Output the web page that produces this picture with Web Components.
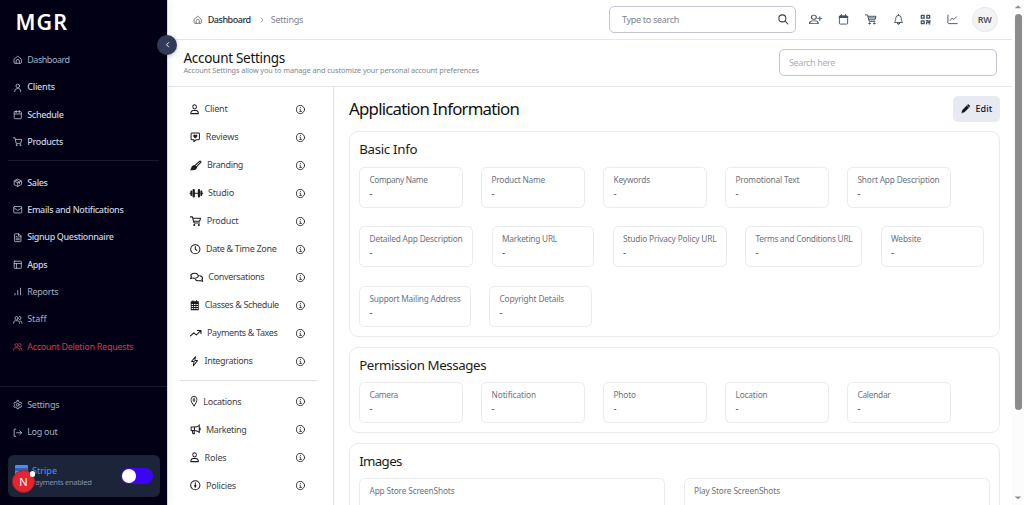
<!DOCTYPE html>
<html lang="en">
<head>
<meta charset="utf-8">
<title>Account Settings</title>
<style>
html,body{margin:0;height:100%;overflow:hidden}
body{font-family:"Noto Sans","Open Sans",sans-serif;background:#fff;color:#111827}
</style>
</head>
<body>
<app-shell></app-shell>
<script>
const ICONS = {
  home:'<path d="M3 10.5 12 3l9 7.5V20a1 1 0 0 1-1 1H4a1 1 0 0 1-1-1z"/><path d="M8 21v-6a4 4 0 0 1 8 0v6"/>',
  user:'<circle cx="12" cy="7.5" r="4.5"/><path d="M4.5 22v-2a6.5 6.5 0 0 1 6.5-6h2a6.5 6.5 0 0 1 6.5 6v2"/>',
  calendar:'<rect x="3" y="4" width="18" height="18" rx="2"/><path d="M16 1.5v5M8 1.5v5M3 10h18"/>',
  cart:'<circle cx="9" cy="20.5" r="1.3"/><circle cx="18.5" cy="20.5" r="1.3"/><path d="M1 2h4l3 14h11.5L22 6H6"/>',
  box:'<path d="m21 7.5-9-5-9 5v9l9 5 9-5zM3 7.5l9 5 9-5M12 12.500v9M7.500 5l9 5v4"/>',
  mail:'<rect x="2" y="4" width="20" height="16" rx="1.500"/><path d="m2 7 10 7 10-7"/>',
  file:'<path d="M14 2H5.500A1.500 1.500 0 0 0 4 3.500v17A1.500 1.500 0 0 0 5.500 22h13a1.500 1.500 0 0 0 1.500-1.500V8zM14 2v6h6M8 9h2M8 13h8M8 17h8"/>',
  layout:'<rect x="3" y="3" width="18" height="18" rx="1.500"/><path d="M3 9h18M9 21V9"/>',
  bars:'<path d="M19 20V3M12 20V9M5 20v-4"/>',
  users:'<circle cx="9" cy="8" r="4"/><path d="M1.500 21v-1.500a5 5 0 0 1 5-5h5a5 5 0 0 1 5 5V21M16 3.500a4 4 0 0 1 0 8.500M19 15a5 5 0 0 1 3.500 4.500V21"/>',
  gear:'<circle cx="12" cy="12" r="3.500"/><path d="m10 2-.7 3-2.300 1.300-3-.9-2 3.400L4.300 11v2.200L2 15.300l2 3.400 3-.9L9.300 19l.7 3h4l.7-3 2.300-1.200 3 .9 2-3.400-2.300-2.100V11L22 8.800l-2-3.400-3 .9L14.700 5 14 2z"/>',
  logout:'<path d="M7 3H3v18h4M9 12h13M17 7l5 5-5 5"/>',
  left:'<path d="m15 5-7 7 7 7"/>',
  right:'<path d="m8 4 8 8-8 8"/>',
  search:'<circle cx="10" cy="10" r="8"/><path d="m16 16 6.500 6.500"/>',
  person:'<circle cx="12" cy="6.500" r="4.800"/><path d="M2 22c0-4.500 3-7 6.500-7h7c3.500 0 6.500 2.500 6.500 7z"/>',
  useradd:'<circle cx="9" cy="7" r="4.500"/><path d="M1 21c0-4 2.500-6 5.500-6h5c3 0 5.500 2 5.500 6zM20 6v8M16 10h8"/>',
  cal2:'<rect x="3" y="4" width="18" height="18" rx="2"/><path d="M3.500 6.500h17" stroke-width="4"/><path d="M7.500 1v4M16.500 1v4"/>',
  cart2:'<path d="M1 2h4l3.500 14H20M6 5h16l-2 7.500H8M8 8.500h13"/><circle cx="9" cy="20.500" r="1.400" fill="currentColor"/><circle cx="18.500" cy="20.500" r="1.400" fill="currentColor"/>',
  cart3:'<path d="M1 2h4l3.500 14H20M6 5h16l-2 7H8"/><circle cx="9" cy="20.500" r="1" fill="currentColor"/><circle cx="18.500" cy="20.500" r="1" fill="currentColor"/>',
  bell:'<path d="M12 1v2M12 3a6 6 0 0 0-6 6c0 5-1 7-3 9.500h18c-2-2.500-3-4.500-3-9.500a6 6 0 0 0-6-6z"/><path d="M9.500 20.500a2.600 2.600 0 0 0 5 0z" fill="currentColor"/>',
  qr:'<path d="M3 3h6v6H3zM15 3h6v6h-6zM3 15h6v6H3zM14 14.500h3.500V18h4v-4M14.500 21.500v-3M21.500 21.500h-2" stroke-width="3"/>',
  chart:'<path d="M2 2.500v16.500a2 2 0 0 0 2 2h18.500M7 14l4-5 4 3 6-6"/>',
  info:'<circle cx="12" cy="12" r="10.800"/><path stroke-width="1.800" d="M9.500 17.200h5.500M10 11h2.300v6M12 6v1"/>',
  review:'<path d="M4 2.500h16A1.500 1.500 0 0 1 21.500 4v12a1.500 1.500 0 0 1-1.500 1.500h-5L9 22v-4.500H4A1.500 1.500 0 0 1 2.500 16V4A1.500 1.500 0 0 1 4 2.500z"/><path fill="currentColor" stroke-width="1" d="M12 14 8 10a2.200 2.200 0 0 1 4-2.500A2.200 2.200 0 0 1 16 10z"/>',
  brush:'<path d="M10 13 19.500 3a1.700 1.700 0 0 1 2.500 2.500L13 16z"/><path fill="currentColor" d="M10 13.500c2 .5 3 2 3 3.500 0 4-3 5.500-11.500 5.500 2-1 2-3 2.500-5.500.6-2.500 3-4 6-3.500z"/>',
  dumbbell:'<path d="M7 4.500v15M17 4.500v15" stroke-width="4.500"/><path d="M2.500 7.500v9M21.500 7.500v9" stroke-width="3.500"/><path d="M0 12h3M8 12h8M21 12h3"/>',
  clock:'<circle cx="12" cy="12" r="10.500"/><path d="M12 6v6l3.500 2.500"/>',
  chat:'<path d="M14.500 11.500c2.500-4-1-8.500-6-8.500S0 7 2.500 11L1 15c2 0 3.500-.8 4.500-1.500 3.500 1.200 7 .5 9-2z"/><path d="M18 8.500c4.500 1 6.500 5 4 8.500l1.500 4c-2 0-3.500-.5-4.500-1.500-4 1.400-7.500.5-9-2.500"/>',
  calsolid:'<path fill="currentColor" d="M3 4h18v4H3z"/><path d="M3 8v14h18V8M7.500 1v4M16.500 1v4M3 12.500h18M3 17.300h18M9 8v14M15 8v14"/>',
  trend:'<path d="m1 18 7-7 5 5 9-10M15 5.500H22.500v7"/>',
  bolt:'<path d="M14.500 1.500 4 12.500h7L8.500 22.500l11-12h-7z"/>',
  pin:'<path d="M12 23c-4-5-9-9.500-9-14a9 8 0 0 1 18 0c0 4.500-5 9-9 14z"/><circle cx="12" cy="9" r="2.800"/>',
  horn:'<path d="M21 2v18M21 3c-4 3-7 4-11 4H2.500v8H10c4 0 7 1 11 4M10 7v8M5 15l1.500 7H10l-1-7M23 9v4"/>',
  policy:'<circle cx="12" cy="12" r="10.500"/><path d="M12 6.500v10M10.500 12.500l1.500 4 1.500-4"/>',
  pencil:'<path fill="currentColor" d="m2 22 1.500-6.500L14.500 4.500l5 5L8.500 20.500zM16 3l1.500-1.500c1.500-1 5.500 2.500 4.500 4.500L20.800 8z" stroke-width="1"/>',
  up:'<path fill="currentColor" d="m2 18 10-12 10 12z"/>',
  down:'<path fill="currentColor" d="m2 6 10 12L22 6z"/>'
};

/* <ui-icon name size stroke>: one line icon */
class UiIcon extends HTMLElement {
  connectedCallback() {
    const s = this.getAttribute('size') || 10, w = this.getAttribute('w') || s;
    this.attachShadow({mode:'open'}).innerHTML = `
      <style>:host{display:inline-flex;flex:none;width:${w}px;height:${s}px}
      svg{display:block;width:100%;height:100%;overflow:visible}</style>
      <svg viewBox="0 0 24 24" ${w != s ? 'preserveAspectRatio="none"' : ''} fill="none" stroke="currentColor" stroke-width="${this.getAttribute('stroke') || 2}"
       stroke-linecap="round" stroke-linejoin="round">${ICONS[this.getAttribute('name')]}</svg>`;
  }
}
customElements.define('ui-icon', UiIcon);

/* <ui-text w>: a single line tracked to a set measure */
class UiText extends HTMLElement {
  connectedCallback() {
    this.attachShadow({mode:'open'}).innerHTML =
      `<style>:host{display:block;flex:none;white-space:nowrap}span{display:inline-block}</style><span><slot></slot></span>`;
    const span = this.shadowRoot.querySelector('span'), w = +this.getAttribute('w');
    if (!w) return;
    const n = this.textContent.length;
    const natural = span.getBoundingClientRect().width;
    if (natural) span.style.letterSpacing = ((w - natural) / n).toFixed(3) + 'px';
    this.style.width = w + 'px';
  }
}
customElements.define('ui-text', UiText);

class SideItem extends HTMLElement {
  connectedCallback() {
    const c = this.getAttribute('tone');
    this.attachShadow({mode:'open'}).innerHTML = `
      <style>:host{display:flex;align-items:center;height:27.320px;padding-left:12.500px;gap:5.200px;font-size:9px;line-height:12px;
        color:${c === 'red' ? '#d03a4c' : c === 'dim' ? '#a3afc2' : '#c9d2e0'};font-weight:${c ? 400 : 500}}
        ui-icon{color:${c === 'red' ? '#c93848' : '#b0bac9'}}</style>
      <ui-icon name="${this.getAttribute('icon')}" size="9.500" stroke="2.200"></ui-icon>
      <ui-text w="${this.getAttribute('w')}">${this.getAttribute('label')}</ui-text>`;
  }
}
customElements.define('side-item', SideItem);

class StripeCard extends HTMLElement {
  connectedCallback() {
    this.attachShadow({mode:'open'}).innerHTML = `
      <style>
      :host{position:relative;display:flex;box-sizing:border-box;width:151.500px;height:42.500px;margin-left:8px;background:#1c2439;border-radius:6px;padding:10px 7px 0 24px;justify-content:space-between}
      .t{color:#4386ee;font-size:9px;line-height:12px;font-weight:500}
      .p{color:#8391a9;font-size:7.500px;line-height:10px;margin-left:-1px}
      .sw{box-sizing:border-box;width:31.500px;height:15.500px;border-radius:8px;background:#3b05f3;margin-top:3.500px;padding:1px}
      .sw i{display:block;width:13.500px;height:13.500px;border-radius:50%;background:#fff}
      .logo{position:absolute;left:7px;top:10.500px;width:13px;height:13px;background:linear-gradient(#4c8bf5 3px,#2f62b5 3px 6px,#4c8bf5 6px);border-radius:1px}
      .n{position:absolute;left:4px;top:15px;width:23px;height:23px;box-sizing:border-box;border:1px solid #a31f2a;border-radius:50%;background:#e2252f;color:#fff;font-size:11px;line-height:21px;text-align:center}
      .dot{position:absolute;left:21.500px;top:16.500px;width:5.500px;height:5.500px;border-radius:50%;background:#fff}
      </style>
      <div><ui-text class="t" w="25">Stripe</ui-text><ui-text class="p" w="60.500">Payments enabled</ui-text></div>
      <div class="sw"><i></i></div><div class="logo"></div><div class="n">N</div><div class="dot"></div>`;
  }
}
customElements.define('stripe-card', StripeCard);

class SideBar extends HTMLElement {
  connectedCallback() {
    const it = a => a.map(([i,l,w,t]) => `<side-item icon="${i}" label="${l}" w="${w}" ${t ? `tone="${t}"` : ''}></side-item>`).join('');
    this.attachShadow({mode:'open'}).innerHTML = `
      <style>
      :host{position:relative;z-index:2;display:flex;flex-direction:column;box-sizing:border-box;width:167.500px;height:505px;background:#020014;border-right:1px solid #d8dae2;box-shadow:0 0 12px rgba(0,0,0,.06)}
      .brand{color:#fff;font-size:21.500px;line-height:26px;font-weight:600;padding:9px 0 0 15.500px;height:37.300px}
      hr{border:0;height:1px;background:#171a2d;margin:4px 8px 8.500px}
      .gap{flex:1}
      hr.full{margin:0 0 4px}
      stripe-card{margin-top:8.500px;margin-bottom:8px}
      .toggle{position:absolute;left:157.400px;top:34.500px;width:20px;height:20px;border-radius:50%;background:#303b58;color:#fff;display:flex;align-items:center;justify-content:center;box-shadow:0 1px 4px rgba(0,0,0,.25)}
      </style>
      <ui-text class="brand" w="52.500">MGR</ui-text>
      ${it([['home','Dashboard',42.5,'dim'],['user','Clients',27.7],['calendar','Schedule',36.3],['cart','Products',35.8]])}
      <hr>
      ${it([['box','Sales',20.5],['mail','Emails and Notifications',96.3],['file','Signup Questionnaire',86.3],['layout','Apps',20.2],['bars','Reports',31,'dim'],['users','Staff',19.3,'dim'],['users','Account Deletion Requests',106,'red']])}
      <div class="gap"></div><hr class="full">
      ${it([['gear','Settings',32,'dim'],['logout','Log out',30.2,'dim']])}
      <stripe-card></stripe-card>
      <div class="toggle"><ui-icon name="left" size="7.500" stroke="3"></ui-icon></div>`;
  }
}
customElements.define('side-bar', SideBar);

class SearchField extends HTMLElement {
  connectedCallback() {
    this.attachShadow({mode:'open'}).innerHTML = `
      <style>:host{display:flex;align-items:center;justify-content:space-between;box-sizing:border-box;border:1px solid #c1c5d0;border-radius:5px;font-size:9px;line-height:12px;background:#fff}</style>
      <slot></slot>`;
  }
}
customElements.define('search-field', SearchField);

class TopBar extends HTMLElement {
  connectedCallback() {
    this.attachShadow({mode:'open'}).innerHTML = `
      <style>
      :host{display:flex;align-items:center;box-sizing:border-box;height:40px;border-bottom:1px solid #e6e7ea;padding:0 14.500px 0 25.500px;font-size:9px;line-height:12px;color:#7d8491}
      .b{color:#262d3b;font-weight:500;margin:0 8.500px 0 5.200px}
      .s{margin-left:5.500px}
      ui-icon.h{color:#5b6472}
      search-field{width:187px;height:27px;margin-left:auto;padding:0 6px 0 12.500px;color:#7d8491}
      search-field ui-icon{color:#333b48}
      .icons{display:flex;align-items:center;width:149.500px;justify-content:space-between;margin:0 14px 0 13px;color:#43505f}
      .av{box-sizing:border-box;width:25.500px;height:25.500px;border-radius:50%;background:#f2f3f5;border:1px solid #e5e7eb;color:#4a5362;display:flex;align-items:center;justify-content:center;font-weight:600}
      </style>
      <ui-icon class="h" name="home" size="9.500"></ui-icon><ui-text class="b" w="43">Dashboard</ui-text>
      <ui-icon name="right" size="6" stroke="3"></ui-icon><ui-text class="s" w="32.500">Settings</ui-text>
      <search-field><ui-text w="57">Type to search</ui-text><ui-icon name="search" size="10.500" stroke="2.300"></ui-icon></search-field>
      <div class="icons"><ui-icon name="useradd" size="11" w="13"></ui-icon><ui-icon name="cal2" size="11"></ui-icon><ui-icon name="cart2" size="11" w="12"></ui-icon><ui-icon name="bell" size="11"></ui-icon><ui-icon name="qr" size="11"></ui-icon><ui-icon name="chart" size="11"></ui-icon></div>
      <div class="av"><ui-text w="14">RW</ui-text></div>`;
  }
}
customElements.define('top-bar', TopBar);

class PageHead extends HTMLElement {
  connectedCallback() {
    this.attachShadow({mode:'open'}).innerHTML = `
      <style>
      :host{display:flex;justify-content:space-between;box-sizing:border-box;height:47px;border-bottom:1px solid #e6e7ea;padding:9.400px 15px 0 16px}
      .h{font-size:13.500px;line-height:15px;color:#111;font-weight:450;margin-top:1.600px}
      .d{font-size:7.300px;line-height:9px;color:#7f8592}
      search-field{width:218px;height:27px;padding:0 9px;color:#a9afbb}
      </style>
      <div><ui-text class="h" w="101.500">Account Settings</ui-text><ui-text class="d" w="295.500">Account Settings allow you to manage and customize your personal account preferences</ui-text></div>
      <search-field><ui-text class="q" w="46">Search here</ui-text></search-field>`;
  }
}
customElements.define('page-head', PageHead);

class SettingsItem extends HTMLElement {
  connectedCallback() {
    const g = n => this.getAttribute(n);
    this.attachShadow({mode:'open'}).innerHTML = `
      <style>:host{display:flex;align-items:center;height:28px;padding:0 12px 0 9.500px;font-size:9px;line-height:12px;color:#3e4145}
      .l{margin-left:5.800px;margin-right:auto}ui-icon{color:#1c1c1c}</style>
      <ui-icon name="${g('icon')}" size="10.500" w="${g('iw')}" stroke="2.300"></ui-icon><ui-text class="l" w="${g('w')}">${g('label')}</ui-text>
      <ui-icon name="info" size="9" stroke="2.300"></ui-icon>`;
  }
}
customElements.define('settings-item', SettingsItem);

class SettingsNav extends HTMLElement {
  connectedCallback() {
    const it = a => a.map(([i,l,iw,w]) => `<settings-item icon="${i}" label="${l}" iw="${iw}" w="${w}"></settings-item>`).join('');
    this.attachShadow({mode:'open'}).innerHTML = `
      <style>:host{display:block;box-sizing:border-box;width:166px;flex:none;border-right:1px solid #dfe3e6;padding:8px 16px 0 12.500px}
      hr{border:0;height:1px;background:#dededf;margin:4.600px 0 7px}</style>
      ${it([['person','Client',9.2,23],['review','Reviews',10.5,32.5],['brush','Branding',11.7,36],['dumbbell','Studio',12.7,26],['cart3','Product',11.5,31.5],['clock','Date &amp; Time Zone',10.6,70.5],['chat','Conversations',13,56],['calsolid','Classes &amp; Schedule',9.5,74],['trend','Payments &amp; Taxes',11.7,70.5],['bolt','Integrations',9.2,48]])}
      <hr>
      ${it([['pin','Locations',8,38],['horn','Marketing',10.6,40.5],['person','Roles',9.2,22],['policy','Policies',10.6,30]])}`;
  }
}
customElements.define('settings-nav', SettingsNav);

/* <info-field label value bw>: label over its value */
class InfoField extends HTMLElement {
  connectedCallback() {
    const g = n => this.getAttribute(n);
    this.attachShadow({mode:'open'}).innerHTML = `
      <style>:host{display:block;flex:none;box-sizing:border-box;width:${g('bw')}px;height:41px;border:1px solid #eaebed;border-radius:5.500px;padding:6px 0 0 9.300px;font-size:8.300px;line-height:12px}
      .l{color:#6e737e}.v{font-size:9.500px;line-height:14px;margin-top:1px;color:#333}</style>
      <ui-text class="l" w="${g('w')}">${g('label')}</ui-text>${g('value') ? `<div class="v">${g('value')}</div>` : ''}`;
  }
}
customElements.define('info-field', InfoField);

class InfoCard extends HTMLElement {
  connectedCallback() {
    this.attachShadow({mode:'open'}).innerHTML = `
      <style>:host{display:block;box-sizing:border-box;width:651px;border:1px solid #eaebed;border-radius:9px;padding:9px 9px 9px 9.100px;margin-bottom:9.500px}
      .h{font-size:13.300px;line-height:17px;font-weight:450;color:#1a1a1a;margin-bottom:8.500px}</style>
      <ui-text class="h" w="${this.getAttribute('w')}">${this.getAttribute('heading')}</ui-text><slot></slot>`;
  }
}
customElements.define('info-card', InfoCard);

class AppInfo extends HTMLElement {
  connectedCallback() {
    const row = (a, v = '-') => `<div class="row">${a.map(([l,w,bw=103.5]) => `<info-field label="${l}" w="${w}" bw="${bw}" value="${v}"></info-field>`).join('')}</div>`;
    this.attachShadow({mode:'open'}).innerHTML = `
      <style>:host{display:block;padding:9px 0 0 15.600px;flex:1;min-width:0}
      .top{display:flex;justify-content:space-between;width:651px;height:35px}
      .h{font-size:16.800px;line-height:25px;font-weight:450;color:#111}
      .edit{display:flex;box-sizing:border-box;align-items:center;width:47.500px;height:25.500px;border-radius:5px;background:#e8eaf2;padding-left:8px;gap:5.500px;font-size:9px;line-height:12px;font-weight:500;color:#111}
      .row{display:flex;gap:18.500px}.row+.row{margin-top:18.900px}</style>
      <div class="top"><ui-text class="h" w="170">Application Information</ui-text><div class="edit"><ui-icon name="pencil" size="9.500"></ui-icon><ui-text w="16.500">Edit</ui-text></div></div>
      <info-card heading="Basic Info" w="58">
        ${row([['Company Name',58],['Product Name',53.5],['Keywords',36.5],['Promotional Text',64],['Short App Description',82]])}
        ${row([['Detailed App Description',93,114],['Marketing URL',55,102.5],['Studio Privacy Policy URL',93.5,114],['Terms and Conditions URL',97,117],['Website',30]])}
        ${row([['Support Mailing Address',91,111.5],['Copyright Details',64.5,103]])}
      </info-card>
      <info-card heading="Permission Messages" w="127">
        ${row([['Camera',28.5],['Notification',44.5],['Photo',22.5],['Location',32],['Calendar',33]])}
      </info-card>
      <info-card heading="Images" w="42.500">
        ${row([['App Store ScreenShots',85,306],['Play Store ScreenShots',86,306]], '')}
      </info-card>`;
  }
}
customElements.define('app-info', AppInfo);

class ScrollRail extends HTMLElement {
  connectedCallback() {
    this.attachShadow({mode:'open'}).innerHTML = `
      <style>:host{display:flex;flex-direction:column;align-items:center;box-sizing:border-box;width:12px;height:505px;background:#fcfcfc;color:#8b8b8b;padding:4px 0 5px}
      i{width:7px;height:396px;border-radius:4px;background:#8b8b8b;margin:4px 0 auto}</style>
      <ui-icon name="up" size="5.500" w="8" stroke="0"></ui-icon><i></i><ui-icon name="down" size="5.500" w="8" stroke="0"></ui-icon>`;
  }
}
customElements.define('scroll-rail', ScrollRail);

class AppShell extends HTMLElement {
  connectedCallback() {
    this.attachShadow({mode:'open'}).innerHTML = `
      <style>:host{display:flex;width:1024px;height:505px;overflow:hidden}
      main{flex:1;min-width:0;display:flex;flex-direction:column}
      .body{display:flex;flex:1;min-height:0;overflow:hidden}</style>
      <side-bar></side-bar>
      <main><top-bar></top-bar><page-head></page-head><div class="body"><settings-nav></settings-nav><app-info></app-info></div></main>
      <scroll-rail></scroll-rail>`;
  }
}
customElements.define('app-shell', AppShell);
</script>
</body>
</html>
